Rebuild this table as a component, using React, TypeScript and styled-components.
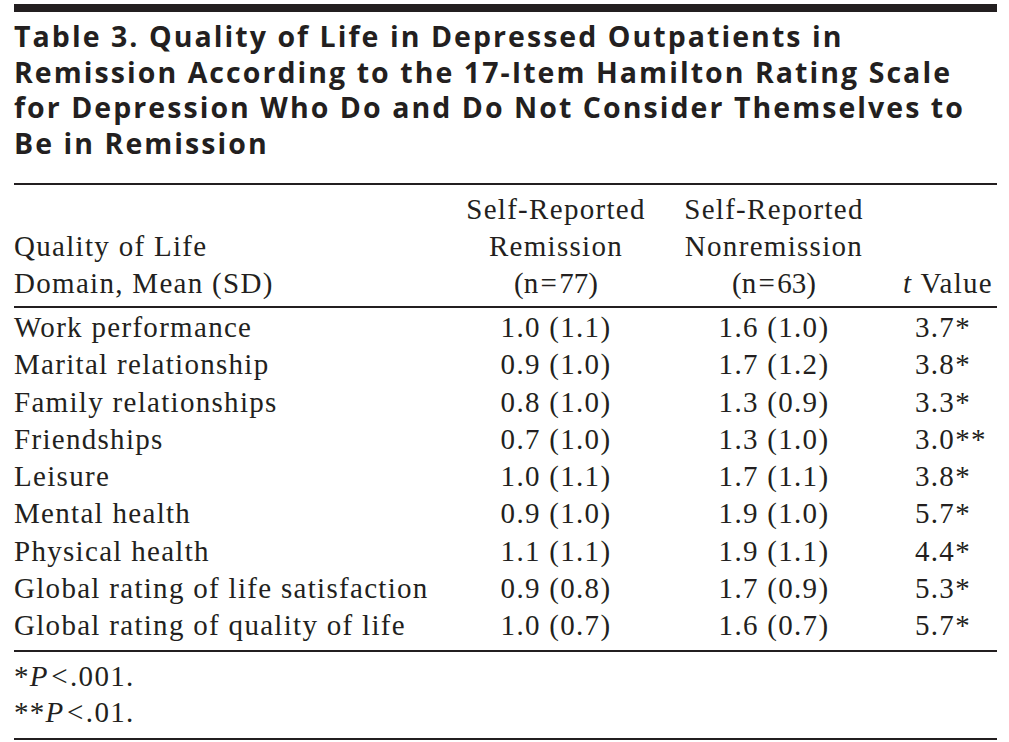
import React from "react";
import styled, { createGlobalStyle } from "styled-components";

const INK = "#231f20";

const GlobalStyle = createGlobalStyle`
  html, body {
    margin: 0;
    padding: 0;
    background: #ffffff;
  }
`;

const Page = styled.div`
  width: 983px;
  padding: 4px 12px 0 14px;
  color: ${INK};
`;

const TopBar = styled.div`
  height: 8px;
  background: ${INK};
`;

const Title = styled.h1`
  margin: 7px 0 0;
  font-family: "Open Sans", "Liberation Sans", sans-serif;
  font-weight: 700;
  font-size: 28.5px;
  line-height: 35.5px;
  letter-spacing: 2.05px;
  white-space: nowrap;
`;

const Rule = styled.div<{ $mt?: number }>`
  height: 2px;
  margin-top: ${(p) => p.$mt ?? 0}px;
  background: ${INK};
`;

const Table = styled.div`
  font-family: "Liberation Serif", "Times New Roman", serif;
  font-size: 29px;
  letter-spacing: 1.3px;
`;

const Row = styled.div`
  display: grid;
  grid-template-columns: 438px 208px 228px 1fr;
  align-items: end;
`;

const HeadRow = styled(Row)`
  padding: 6px 0 4px;
  line-height: 37px;
`;

const Body = styled.div`
  padding: 1px 0 5px;
  line-height: 37.3px;
`;

const Cell = styled.div<{ $align?: "left" | "center" | "right"; $pl?: number; $pr?: number }>`
  text-align: ${(p) => p.$align ?? "left"};
  padding-left: ${(p) => p.$pl ?? 0}px;
  padding-right: ${(p) => p.$pr ?? 0}px;
  white-space: nowrap;
`;

const Tight = styled.span`
  letter-spacing: 0;
`;

const Notes = styled.div`
  font-family: "Liberation Serif", "Times New Roman", serif;
  font-size: 29px;
  letter-spacing: 1.3px;
  line-height: 36.5px;
  padding: 6px 0 7px;
`;

const rows: [string, string, string, string][] = [
  ["Work performance", "1.0 (1.1)", "1.6 (1.0)", "3.7*"],
  ["Marital relationship", "0.9 (1.0)", "1.7 (1.2)", "3.8*"],
  ["Family relationships", "0.8 (1.0)", "1.3 (0.9)", "3.3*"],
  ["Friendships", "0.7 (1.0)", "1.3 (1.0)", "3.0**"],
  ["Leisure", "1.0 (1.1)", "1.7 (1.1)", "3.8*"],
  ["Mental health", "0.9 (1.0)", "1.9 (1.0)", "5.7*"],
  ["Physical health", "1.1 (1.1)", "1.9 (1.1)", "4.4*"],
  ["Global rating of life satisfaction", "0.9 (0.8)", "1.7 (0.9)", "5.3*"],
  ["Global rating of quality of life", "1.0 (0.7)", "1.6 (0.7)", "5.7*"],
];

export default function App() {
  return (
    <>
      <GlobalStyle />
      <Page>
        <TopBar />
        <Title>
          Table 3. Quality of Life in Depressed Outpatients in
          <br />
          Remission According to the 17-Item Hamilton Rating Scale
          <br />
          for Depression Who Do and Do Not Consider Themselves to
          <br />
          Be in Remission
        </Title>
        <Rule $mt={22} />
        <Table>
          <HeadRow>
            <Cell>
              Quality of Life
              <br />
              Domain, Mean (SD)
            </Cell>
            <Cell $align="center">
              Self-Reported
              <br />
              Remission
              <br />
              <Tight>(n{"\u200a"}={"\u200a"}77)</Tight>
            </Cell>
            <Cell $align="center">
              Self-Reported
              <br />
              Nonremission
              <br />
              <Tight>(n{"\u200a"}={"\u200a"}63)</Tight>
            </Cell>
            <Cell $align="right" $pr={4}>
              <i>t</i> Value
            </Cell>
          </HeadRow>
          <Rule />
          <Body>
            {rows.map((r) => (
              <Row key={r[0]}>
                <Cell>{r[0]}</Cell>
                <Cell $align="center">{r[1]}</Cell>
                <Cell $align="center">{r[2]}</Cell>
                <Cell $pl={27}>{r[3]}</Cell>
              </Row>
            ))}
          </Body>
        </Table>
        <Rule />
        <Notes>
          *<i>P</i>
          <Tight>{"\u200a"}&lt;{"\u200a"}</Tight>.001.
          <br />
          **<i>P</i>
          <Tight>{"\u200a"}&lt;{"\u200a"}</Tight>.01.
        </Notes>
        <Rule />
      </Page>
    </>
  );
}
